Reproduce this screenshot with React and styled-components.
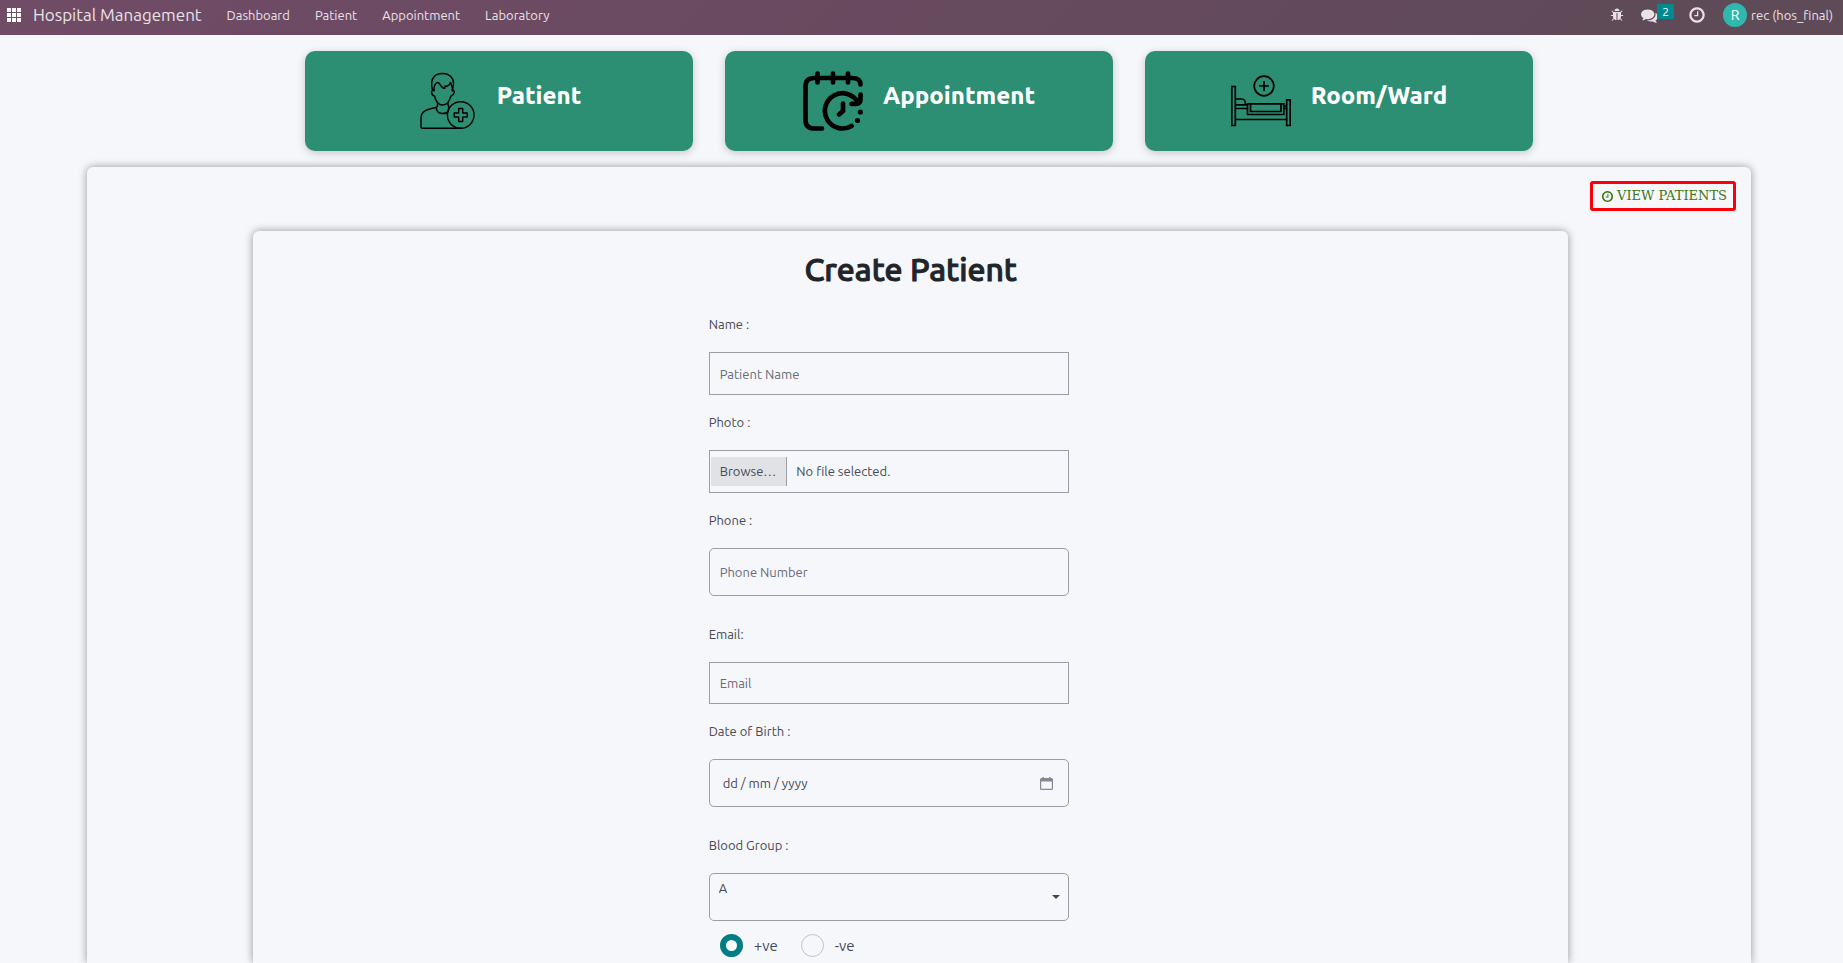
import React, { useState } from "react";
import styled, { createGlobalStyle } from "styled-components";

const GlobalStyle = createGlobalStyle`
  *, *::before, *::after { box-sizing: border-box; }
  body {
    margin: 0;
    background: #f6f7fb;
    color: #474a56;
    font: 13px/20px Ubuntu, "Noto Sans", "Open Sans", sans-serif;
  }
  input, select, button { font: inherit; color: inherit; }
`;

const Page = styled.div`
  min-height: 100vh;
  display: flex;
  flex-direction: column;
`;

const Navbar = styled.header`
  height: 35px;
  flex: none;
  display: flex;
  align-items: flex-start;
  justify-content: space-between;
  padding: 0 10px 0 7px;
  background: linear-gradient(135deg, #714b67, #5f4a58 90%);
  color: #e9e2e7;
`;

const NavGroup = styled.div`
  height: 30px;
  display: flex;
  align-items: center;
`;

const IconButton = styled.button`
  display: flex;
  align-items: center;
  margin: 0;
  padding: 0;
  border: 0;
  background: none;
  color: inherit;
  cursor: pointer;
`;

const Brand = styled.a`
  margin: 0 25px 0 12px;
  color: inherit;
  font-size: 17px;
  text-decoration: none;
`;

const Menu = styled.nav`
  display: flex;
  gap: 25px;
`;

const MenuLink = styled.a`
  color: inherit;
  text-decoration: none;
`;

const SysTray = styled(NavGroup)`
  gap: 17px;
`;

const Messages = styled(IconButton)`
  position: relative;
  width: 30px;
`;

const Badge = styled.span`
  position: absolute;
  left: 16px;
  top: -3px;
  width: 17px;
  height: 15px;
  background: #00898f;
  color: #fff;
  font-size: 12px;
  line-height: 15px;
  text-align: center;
`;

const UserButton = styled(IconButton)`
  gap: 4px;
`;

const Avatar = styled.span`
  width: 24px;
  height: 24px;
  border-radius: 50%;
  background: #2fb9ae;
  color: #fff;
  font-size: 14px;
  line-height: 24px;
  text-align: center;
`;

const Content = styled.main`
  flex: 1;
  display: flex;
  flex-direction: column;
  gap: 16px;
  padding: 16px 92px 0 87px;
`;

const Cards = styled.div`
  display: flex;
  justify-content: center;
  gap: 32px;
`;

const Card = styled.a`
  flex: 0 1 388px;
  height: 100px;
  display: flex;
  align-items: center;
  justify-content: center;
  gap: 20px;
  border-radius: 10px;
  background: #2c8e72;
  box-shadow: 0 2px 8px rgba(0, 0, 0, 0.2);
  color: #000;
  text-decoration: none;
`;

const CardTitle = styled.h2`
  margin: 0 0 10px;
  color: #fff;
  font-size: 24px;
  font-weight: 800;
  line-height: 28px;
`;

const Panel = styled.section`
  flex: 1;
  display: flex;
  flex-direction: column;
  border-radius: 6px 6px 0 0;
  background: #f6f7fb;
  box-shadow: 0 0 8px rgba(0, 0, 0, 0.4);
`;

const FormPanel = styled(Panel)`
  margin: 20px 11% 0 10%;
`;

const Toolbar = styled.div`
  display: flex;
  justify-content: flex-end;
  padding: 14px 15px 0;
`;

const ViewButton = styled.button`
  height: 30px;
  display: flex;
  align-items: center;
  gap: 3px;
  padding: 0 6px 0 8px;
  border: 3px solid #fb0007;
  border-radius: 3px;
  background: none;
  color: #3f7610;
  font-family: "DejaVu Serif", serif;
  font-size: 13px;
  cursor: pointer;
`;

const Heading = styled.h1`
  margin: 19px 0 25px;
  color: #212529;
  font-size: 32px;
  font-weight: 500;
  line-height: 39px;
  text-align: center;
  -webkit-text-stroke: 1px #212529;
`;

const Form = styled.form`
  padding-right: 44px;
`;

const Fields = styled.div`
  width: 360px;
  max-width: 100%;
  margin: 0 auto;
`;

const Field = styled.div`
  margin-bottom: ${(p) => (p.$space ? p.$space : 17)}px;
`;

const Label = styled.label`
  display: block;
  margin-bottom: 18px;
`;

const TextInput = styled.input`
  display: block;
  width: 100%;
  height: ${(p) => p.$height || 43}px;
  padding: 0 10px;
  border: 1px solid #9a9ea7;
  border-radius: ${(p) => (p.$rounded ? 5 : 0)}px;
  background: transparent;
  &::placeholder { color: #686b7b; opacity: 1; }
`;

const FileBox = styled.div`
  position: relative;
  height: 43px;
  display: flex;
  align-items: center;
  gap: 9px;
  padding-left: 1px;
  border: 1px solid #9a9ea7;
  line-height: 29px;
`;

const FileInput = styled.input`
  position: absolute;
  inset: 0;
  width: 100%;
  height: 100%;
  opacity: 0;
  cursor: pointer;
`;

const Browse = styled.span`
  height: 29px;
  padding: 0 10px 0 9px;
  border-right: 1px solid #9a9ea7;
  background: #e0e2e6;
`;

const DateBox = styled.div`
  height: 48px;
  display: flex;
  align-items: center;
  padding: 0 15px 0 13px;
  border: 1px solid #9a9ea7;
  border-radius: 5px;
`;

const DateInput = styled.input`
  flex: 1;
  min-width: 0;
  padding: 0;
  border: 0;
  background: transparent;
  &::placeholder { color: #474a56; opacity: 1; }
`;

const SelectBox = styled.div`
  display: grid;
  align-items: center;
  > * { grid-area: 1 / 1; }
`;

const Select = styled.select`
  width: 100%;
  height: 48px;
  padding: 4px 9px 22px;
  border: 1px solid #9a9ea7;
  border-radius: 5px;
  appearance: none;
  background: transparent;
`;

const Caret = styled.span`
  justify-self: end;
  margin-right: 9px;
  border: 4px solid transparent;
  border-top-color: #444854;
  border-bottom: 0;
  pointer-events: none;
`;

const Radios = styled.div`
  display: flex;
  gap: 23px;
  padding: 13px 0 0 11px;
`;

const RadioLabel = styled.label`
  display: flex;
  align-items: center;
  gap: 11px;
  font-size: 15px;
`;

const Radio = styled.input`
  appearance: none;
  width: 23px;
  height: 23px;
  margin: 0;
  border: 1px solid #c0c2c8;
  border-radius: 50%;
  &:checked { border: 6px solid #017e84; background: #fff; }
`;

const GLYPHS = {
  bug: "M1696 960q0 26-19 45t-45 19h-224q0 171-67 290l208 209q19 19 19 45t-19 45q-18 19-45 19t-45-19l-198-197q-5 5-15 13t-42 28.5-65 36.5-82 29-97 13v-896h-128v896q-51 0-101.5-13.5t-87-33-66-39-43.5-32.5l-15-14-183 207q-20 21-48 21-24 0-43-16-19-18-20.5-44.5t15.5-46.5l202-227q-58-114-58-274h-224q-26 0-45-19t-19-45 19-45 45-19h224v-294l-173-173q-19-19-19-45t19-45 45-19 45 19l173 173h844l173-173q19-19 45-19t45 19 19 45-19 45l-173 173v294h224q26 0 45 19t19 45zm-480-576h-640q0-133 93.5-226.5t226.5-93.5 226.5 93.5 93.5 226.5z",
  comments: "M1408 768q0 139-94 257t-256.5 186.5-353.5 68.5q-86 0-176-16-124 88-278 128-36 9-86 16h-3q-11 0-20.5-8t-11.5-21q-1-3-1-6.5t.5-6.5 2-6l2.5-5 3.5-5.5 4-5 4.5-5 4-4.5q5-6 23-25t26-29.5 22.5-29 25-38.5 20.5-44q-124-72-195-177t-71-224q0-139 94-257t256.5-186.5 353.5-68.5 353.5 68.5 256.5 186.5 94 257zm384 256q0 120-71 224.5t-195 176.5q10 24 20.5 44t25 38.5 22.5 29 26 29.5 23 25q1 1 4 4.5t4.5 5 4 5 3.5 5.5l2.5 5 2 6 .5 6.5-1 6.5q-3 14-13 22t-22 7q-50-7-86-16-154-40-278-128-90 16-176 16-271 0-472-132 58 4 88 4 161 0 309-45t264-129q125-92 192-212t67-254q0-77-23-152 129 71 204 178t75 230z",
  clock: "M1024 544v448q0 14-9 23t-23 9h-320q-14 0-23-9t-9-23v-64q0-14 9-23t23-9h224v-352q0-14 9-23t23-9h64q14 0 23 9t9 23zm416 352q0-148-73-273t-198-198-273-73-273 73-198 198-73 273 73 273 198 198 273 73 273-73 198-198 73-273zm224 0q0 209-103 385.5t-279.5 279.5-385.5 103-385.5-103-279.5-279.5-103-385.5 103-385.5 279.5-279.5 385.5-103 385.5 103 279.5 279.5 103 385.5z",
};

const Glyph = ({ name, size }) => (
  <svg width={size} height={size} viewBox="0 0 1792 1792" fill="currentColor" aria-hidden="true">
    <path d={GLYPHS[name]} />
  </svg>
);

const AppsIcon = () => (
  <svg width="14" height="14" viewBox="0 0 14 14" fill="#fff" aria-hidden="true">
    {[0, 5, 10].map((y) => [0, 5, 10].map((x) => (
      <rect key={`${x}-${y}`} x={x} y={y} width="4" height="4" />
    )))}
  </svg>
);

const PatientIcon = () => (
  <svg width="60" height="60" viewBox="0 0 60 60" fill="none" stroke="currentColor" strokeWidth="1.4" strokeLinejoin="round" strokeLinecap="round" aria-hidden="true">
    <path d="M15.500 19C14 13 14.500 8.500 17 5.800C19 3.300 22 2.500 25.500 2.500C33 2.500 37 7.500 36.500 13L35.500 19" />
    <path d="M17 20V17C17.500 14 18.500 12 20.500 11.500C22 11 23 14 24.500 15.500C25.500 17 27 17.500 28 17V15C30.500 16 33 13.500 33.500 11.500C34 14 35.500 15 35.500 18V20" />
    <path d="M17 19C14 18.500 13.500 24 17.500 25C18.500 29 20 34 25.500 34S32.500 29 34 25C38 23.500 38.500 19 35 19" />
    <path d="M20.500 31.500V35C18.500 36.500 19 42.500 25.500 42.500S32 39 31.500 37M31 31.500V34L32 36" />
    <path d="M19 36.500C11 38 4 40 4 47V56Q4 57.300 5.500 57.300H44" />
    <circle cx="43.700" cy="44" r="13.300" />
    <path d="M41.700 37.500H45.700V42H50.200V46H45.700V50.500H41.700V46H37.200V42H41.700Z" />
  </svg>
);

const AppointmentIcon = () => (
  <svg width="60" height="60" viewBox="0 0 60 60" fill="none" stroke="currentColor" strokeWidth="4.700" strokeLinecap="round" aria-hidden="true">
    <path d="M19 57.500H11Q2.500 57.500 2.500 49V15.500Q2.500 7 11 7H49Q57.500 7 57.500 13.500M14.500 2.500V11.500M30 2.500V11.500M45 2.500V11.500" />
    <path d="M48.500 55A17.600 17.600 0 1 1 55 31.500" />
    <path d="M57.500 23.500V28Q57.500 32.800 53 32.800H48.500M40 32.500V40L36 43.500" />
    <g fill="currentColor" stroke="none">
      <circle cx="57.300" cy="41" r="2.600" />
      <circle cx="54.500" cy="49.500" r="2.600" />
    </g>
  </svg>
);

const BedIcon = () => (
  <svg width="60" height="60" viewBox="0 0 60 60" fill="none" stroke="currentColor" strokeWidth="1.700" aria-hidden="true">
    <circle cx="33" cy="15" r="9.800" />
    <path d="M33 10V20M28 15H38" />
    <path d="M.8 15.500H4.300V54.500H.8ZM55.700 28.800H59.200V54.500H55.700ZM4.300 28H11Q14.500 28 14.500 33.800M4.300 33.800H16.500M4.300 37.500H16.500M52.800 35H55.700M52.800 37.500H55.700M4.300 48.500H55.700" />
    <path d="M16.500 32.800H52.800V43.500H16.500ZM19.500 32.800V40.500H50V32.800" />
  </svg>
);

const CalendarIcon = () => (
  <svg width="13" height="13" viewBox="0 0 13 13" fill="#858894" aria-hidden="true">
    <path d="M2.500 0H4V1H9V0H10.500V1H11.500Q13 1 13 2.500V11.500Q13 13 11.500 13H1.500Q0 13 0 11.500V2.500Q0 1 1.500 1H2.500ZM1.200 4.500V11.800H11.800V4.500Z" fillRule="evenodd" />
  </svg>
);

const MENU = ["Dashboard", "Patient", "Appointment", "Laboratory"];

const CARDS = [
  { title: "Patient", Icon: PatientIcon },
  { title: "Appointment", Icon: AppointmentIcon },
  { title: "Room/Ward", Icon: BedIcon },
];

export default function App() {
  const [rh, setRh] = useState("+ve");
  return (
    <>
      <GlobalStyle />
      <Page>
        <Navbar>
          <NavGroup>
            <IconButton aria-label="Apps"><AppsIcon /></IconButton>
            <Brand href="#">Hospital Management</Brand>
            <Menu>
              {MENU.map((item) => <MenuLink key={item} href="#">{item}</MenuLink>)}
            </Menu>
          </NavGroup>
          <SysTray>
            <IconButton aria-label="Debug"><Glyph name="bug" size={14} /></IconButton>
            <Messages aria-label="Messages">
              <Glyph name="comments" size={17} />
              <Badge>2</Badge>
            </Messages>
            <IconButton aria-label="Activities"><Glyph name="clock" size={18} /></IconButton>
            <UserButton>
              <Avatar>R</Avatar>
              rec (hos_final)
            </UserButton>
          </SysTray>
        </Navbar>
        <Content>
          <Cards>
            {CARDS.map(({ title, Icon }) => (
              <Card key={title} href="#">
                <Icon />
                <CardTitle>{title}</CardTitle>
              </Card>
            ))}
          </Cards>
          <Panel>
            <Toolbar>
              <ViewButton><Glyph name="clock" size={13} />VIEW PATIENTS</ViewButton>
            </Toolbar>
            <FormPanel>
              <Heading>Create Patient</Heading>
              <Form>
                <Fields>
                  <Field>
                    <Label htmlFor="name">Name :</Label>
                    <TextInput id="name" placeholder="Patient Name" />
                  </Field>
                  <Field>
                    <Label htmlFor="photo">Photo :</Label>
                    <FileBox>
                      <Browse>Browse…</Browse>
                      <span>No file selected.</span>
                      <FileInput id="photo" type="file" />
                    </FileBox>
                  </Field>
                  <Field $space={28}>
                    <Label htmlFor="phone">Phone :</Label>
                    <TextInput id="phone" type="tel" placeholder="Phone Number" $height={48} $rounded />
                  </Field>
                  <Field>
                    <Label htmlFor="email">Email:</Label>
                    <TextInput id="email" type="email" placeholder="Email" $height={42} />
                  </Field>
                  <Field $space={28}>
                    <Label htmlFor="dob">Date of Birth :</Label>
                    <DateBox>
                      <DateInput id="dob" placeholder="dd / mm / yyyy" />
                      <IconButton type="button" aria-label="Open calendar"><CalendarIcon /></IconButton>
                    </DateBox>
                  </Field>
                  <Label htmlFor="blood">Blood Group :</Label>
                  <SelectBox>
                    <Select id="blood" defaultValue="A">
                      <option>A</option>
                      <option>B</option>
                      <option>AB</option>
                      <option>O</option>
                    </Select>
                    <Caret />
                  </SelectBox>
                  <Radios>
                    {["+ve", "-ve"].map((value) => (
                      <RadioLabel key={value}>
                        <Radio type="radio" name="rh" checked={rh === value} onChange={() => setRh(value)} />
                        {value}
                      </RadioLabel>
                    ))}
                  </Radios>
                </Fields>
              </Form>
            </FormPanel>
          </Panel>
        </Content>
      </Page>
    </>
  );
}
